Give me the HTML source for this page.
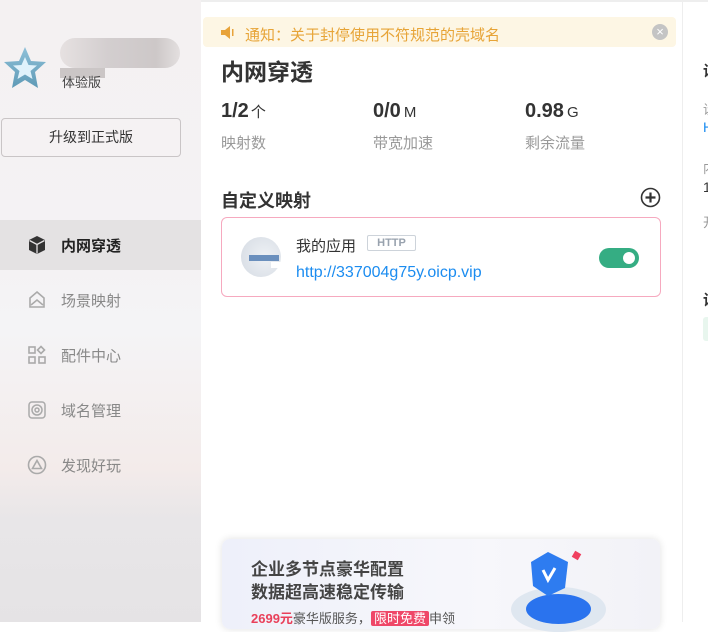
<!DOCTYPE html>
<html><head><meta charset="utf-8"><style>
*{margin:0;padding:0;box-sizing:border-box}
body{width:708px;height:622px;overflow:hidden;position:relative;font-family:"Liberation Sans","Noto Sans CJK SC",sans-serif;background:#fff}
.side{position:absolute;left:0;top:0;width:201px;height:622px;background:linear-gradient(#f4f1f2 0,#f4f2f4 260px,#f4f4f6 330px,#f3ebea 470px,#e8e6e8 520px,#e5e3e5 622px)}
.abs{position:absolute}
.nav{position:absolute;left:0;width:201px;height:50px;display:flex;align-items:center;padding-left:61px;font-size:15px;color:#888}
.nav .ic{position:absolute;left:27px;top:15px;width:20px;height:20px}
.main{position:absolute;left:201px;top:0;width:481px;height:622px;background:#fff;border-top:2px solid #eee}
.right{position:absolute;left:682px;top:0;width:26px;height:622px;border-left:1px solid #eee;border-top:2px solid #eee;background:#fff;overflow:hidden}
</style></head><body>
<div class="side">
  <svg class="abs" style="left:2px;top:45px" width="46" height="46" viewBox="0 0 46 46"><defs><linearGradient id="g" x1="0" y1="0" x2="0" y2="1"><stop offset="0" stop-color="#8fc0d8"/><stop offset="1" stop-color="#5e9ab6"/></linearGradient></defs><path d="M23 2 L29 16 L44 17 L33 27 L36 43 L23 35 L10 43 L13 27 L2 17 L17 16Z" fill="url(#g)"/><path d="M23 12 L26.5 20 L35 20.5 L28.5 26 L30.5 34 L23 29.5 L15.5 34 L17.5 26 L11 20.5 L19.5 20Z" fill="#e0f2fb"/></svg>
  <div class="abs" style="left:60px;top:38px;width:120px;height:30px;border-radius:15px;background:linear-gradient(90deg,#e6e1e1,#d3cecf 40%,#cdc8c8 80%,#e3dfdf)"></div>
  <div class="abs" style="left:60px;top:68px;width:45px;height:10px;background:#cbc6c6"></div>
  <div class="abs" style="left:62px;top:72px;font-size:13px;color:#444">体验版</div>
  <div class="abs" style="left:1px;top:118px;width:180px;height:39px;border:1px solid #c9c5c6;border-radius:4px;background:#f5f2f3;font-size:14px;color:#333;text-align:center;line-height:37px">升级到正式版</div>
  <div class="nav" style="top:220px;background:#e4e2e3;color:#222;font-weight:bold"><svg class="ic" viewBox="0 0 20 20"><path d="M10 1 L18 5 L18 15 L10 19 L2 15 L2 5Z" fill="#333"/><path d="M2.5 5.5 L10 9.5 L17.5 5.5 M10 9.5 L10 18.5" stroke="#e4e2e3" stroke-width="1.3" fill="none"/></svg>内网穿透</div>
  <div class="nav" style="top:275px"><svg class="ic" viewBox="0 0 20 20" fill="none" stroke="#aaa" stroke-width="1.6"><path d="M10 2 L17 8 L17 17 L3 17 L3 8Z"/><path d="M4 15 L10 10 L16 15"/></svg>场景映射</div>
  <div class="nav" style="top:330px"><svg class="ic" viewBox="0 0 20 20" fill="none" stroke="#aaa" stroke-width="1.6"><rect x="2" y="2" width="6" height="6"/><path d="M14 1.5 L17.5 5 L14 8.5 L10.5 5Z"/><rect x="2" y="12" width="6" height="6"/><rect x="12" y="12" width="6" height="6"/></svg>配件中心</div>
  <div class="nav" style="top:385px"><svg class="ic" viewBox="0 0 20 20" fill="none" stroke="#aaa" stroke-width="1.5"><rect x="2" y="2" width="16" height="16" rx="3"/><circle cx="10" cy="10" r="5"/><circle cx="10" cy="10" r="2"/></svg>域名管理</div>
  <div class="nav" style="top:440px"><svg class="ic" viewBox="0 0 20 20" fill="none" stroke="#aaa" stroke-width="1.6"><circle cx="10" cy="10" r="8.5"/><path d="M10 5.5 L14.5 13.5 L5.5 13.5Z"/></svg>发现好玩</div>
</div>
<div class="main">
  <div class="abs" style="left:2px;top:15px;width:473px;height:30px;background:#fdf6e4;border-radius:4px"></div>
  <svg class="abs" style="left:20px;top:24px" width="14" height="13" viewBox="0 0 14 13"><path d="M0 4 H4 L9 0 V13 L4 9 H0Z" fill="#e8a33a"/><rect x="11" y="3" width="1.5" height="7" fill="#e8a33a"/></svg>
  <div class="abs" style="left:44px;top:22px;font-size:15px;color:#e7a437">通知：关于封停使用不符规范的壳域名</div>
  <div class="abs" style="left:451px;top:22px;width:16px;height:16px;border-radius:50%;background:#c4c4c4;color:#fff;font-size:13px;line-height:16px;text-align:center">×</div>
  <div class="abs" style="left:20px;top:51px;font-size:23px;font-weight:bold;color:#333">内网穿透</div>
  <div class="abs" style="left:20px;top:98px;font-size:20px;font-weight:bold;color:#333">1/2<span style="font-size:15px;font-weight:normal;margin-left:2px">个</span></div>
  <div class="abs" style="left:172px;top:98px;font-size:20px;font-weight:bold;color:#333">0/0<span style="font-size:15px;font-weight:normal;margin-left:3px">M</span></div>
  <div class="abs" style="left:324px;top:98px;font-size:20px;font-weight:bold;color:#333">0.98<span style="font-size:15px;font-weight:normal;margin-left:3px">G</span></div>
  <div class="abs" style="left:20px;top:130px;font-size:15px;color:#999">映射数</div>
  <div class="abs" style="left:172px;top:130px;font-size:15px;color:#999">带宽加速</div>
  <div class="abs" style="left:324px;top:130px;font-size:15px;color:#999">剩余流量</div>
  <div class="abs" style="left:20px;top:185px;font-size:18px;font-weight:bold;color:#333">自定义映射</div>
  <svg class="abs" style="left:439px;top:185px" width="21" height="21" viewBox="0 0 21 21"><circle cx="10.5" cy="10.5" r="9" fill="none" stroke="#333" stroke-width="1.6"/><path d="M10.5 5.5V15.5M5.5 10.5H15.5" stroke="#333" stroke-width="2.2"/></svg>
  <div class="abs" style="left:20px;top:215px;width:440px;height:80px;border:1px solid #f6a9bf;border-radius:6px"></div>
  <div class="abs" style="left:40px;top:235px;width:40px;height:40px;border-radius:50%;background:radial-gradient(circle at 60% 50%,#eef1f5,#d5dbe3)"></div>
  <div class="abs" style="left:48px;top:253px;width:30px;height:6px;background:#6a8fbd"></div>
  <div class="abs" style="left:70px;top:260px;width:14px;height:6px;background:#fff"></div>
  <div class="abs" style="left:95px;top:233px;font-size:15px;color:#333">我的应用</div>
  <div class="abs" style="left:166px;top:233px;width:49px;height:16px;border:1px solid #cdd3da;border-radius:2px;font-size:11px;font-weight:bold;color:#98a2ae;text-align:center;line-height:14px">HTTP</div>
  <div class="abs" style="left:95px;top:262px;font-size:16px;color:#1b8cf0">http://337004g75y.oicp.vip</div>
  <div class="abs" style="left:398px;top:246px;width:40px;height:20px;border-radius:10px;background:#35ad83"></div>
  <div class="abs" style="left:422px;top:250px;width:12px;height:12px;border-radius:50%;background:#fff"></div>
  <div class="abs" style="left:21px;top:537px;width:438px;height:90px;border-radius:8px;background:linear-gradient(90deg,#eef0fa,#f7f7fb 60%,#f2f2f7);box-shadow:0 0 8px rgba(0,0,0,.12)"></div>
  <div class="abs" style="left:50px;top:556px;font-size:17px;font-weight:bold;color:#444;line-height:23px">企业多节点豪华配置<br>数据超高速稳定传输</div>
  <div class="abs" style="left:50px;top:606px;font-size:13px;color:#555;white-space:nowrap"><b style="color:#e9405a">2699元</b>豪华版服务，<span style="background:#ef4768;color:#fff;padding:0 3px;border-radius:2px">限时免费</span>申领</div>
  <div class="abs" style="left:310px;top:585px;width:95px;height:45px;border-radius:50%;background:#dfe7f0"></div>
  <div class="abs" style="left:325px;top:592px;width:65px;height:30px;border-radius:50%;background:#2a73ee"></div>
  <svg class="abs" style="left:322px;top:548px" width="50" height="50" viewBox="0 0 50 50"><path d="M25 2 L45 12 L42 38 L25 46 L10 36 L8 12Z" fill="#2e7cf0"/><path d="M20 20 L25 30 L32 18" stroke="#fff" stroke-width="3" fill="none"/></svg>
  <div class="abs" style="left:372px;top:550px;width:7px;height:7px;background:#f04060;transform:rotate(30deg)"></div>
</div>
<div class="right">
  <div class="abs" style="left:20px;top:58px;font-size:15px;font-weight:bold;color:#333">设</div>
  <div class="abs" style="left:20px;top:97px;font-size:13px;color:#999">设</div>
  <div class="abs" style="left:20px;top:117px;font-size:14px;color:#1b8cf0">H</div>
  <div class="abs" style="left:20px;top:156px;font-size:13px;color:#999">内</div>
  <div class="abs" style="left:20px;top:177px;font-size:14px;color:#333">1</div>
  <div class="abs" style="left:20px;top:210px;font-size:13px;color:#999">开</div>
  <div class="abs" style="left:20px;top:287px;font-size:15px;font-weight:bold;color:#333">设</div>
  <div class="abs" style="left:20px;top:315px;width:10px;height:24px;background:#e8f6ee;border-radius:3px"></div>
</div>
</body></html>
